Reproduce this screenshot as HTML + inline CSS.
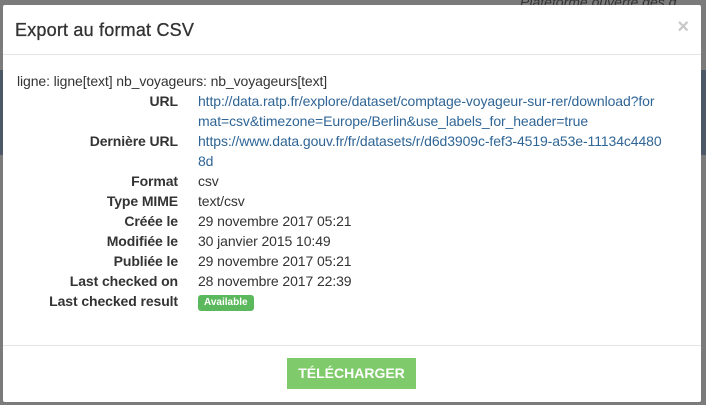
<!DOCTYPE html>
<html><head><meta charset="utf-8"><style>
html,body{margin:0;padding:0}
body{width:706px;height:405px;background:#7b7b7b;position:relative;overflow:hidden;font-family:"Liberation Sans",Arial,sans-serif;}
.bg1{position:absolute;left:0;top:70px;width:706px;height:85px;background:#4d5966}
.bgt{position:absolute;left:520px;top:-6px;color:#333;font-style:italic;font-size:14px}
.m{position:absolute;left:3px;top:5px;width:698px;height:397px;background:#fff;border-radius:2px}
.h{position:absolute;left:0;top:0;width:100%;height:49px;border-bottom:1px solid #e5e5e5}
.h .t{position:absolute;left:12px;top:15px;font-size:18px;color:#333;letter-spacing:0.2px;-webkit-text-stroke:0.3px #333}
.x{position:absolute;right:12px;top:11px;font-size:20px;color:#c8c8c8;font-weight:bold}
.b{position:absolute;left:14px;top:66px;font-size:14px;color:#333;line-height:20px;letter-spacing:-0.1px}
.row{position:absolute;left:0;width:690px}
.l{position:absolute;right:529px;font-weight:bold;white-space:nowrap}
.v{position:absolute;left:181px;white-space:nowrap}
a{color:#2f6596;text-decoration:none}
.badge{display:inline-block;background:#5cb85c;color:#fff;font-size:10px;font-weight:bold;padding:0 6px;line-height:16px;border-radius:3px;vertical-align:1px;letter-spacing:0}
.f{position:absolute;left:0;top:340px;width:100%;border-top:1px solid #e5e5e5}
.btn{position:absolute;left:284px;top:353px;width:129px;height:31px;background:#7fcb6b;color:#fff;font-weight:bold;font-size:14px;text-align:center;line-height:31px}
</style></head><body>
<div class="bg1"></div>
<div class="bgt">Plateforme ouverte des d</div>
<div class="m">
<div class="h"><div class="t">Export au format CSV</div><div class="x">×</div></div>
<div class="b">
<div class="row" style="top:0">ligne: ligne[text] nb_voyageurs: nb_voyageurs[text]</div>
<div class="row" style="top:20px"><span class="l">URL</span><span class="v"><a>http://data.ratp.fr/explore/dataset/comptage-voyageur-sur-rer/download?for<br>mat=csv&amp;timezone=Europe/Berlin&amp;use_labels_for_header=true</a></span></div>
<div class="row" style="top:60px"><span class="l">Dernière URL</span><span class="v"><a>https://www.data.gouv.fr/fr/datasets/r/d6d3909c-fef3-4519-a53e-11134c4480<br>8d</a></span></div>
<div class="row" style="top:100px"><span class="l">Format</span><span class="v">csv</span></div>
<div class="row" style="top:120px"><span class="l">Type MIME</span><span class="v">text/csv</span></div>
<div class="row" style="top:140px"><span class="l">Créée le</span><span class="v">29 novembre 2017 05:21</span></div>
<div class="row" style="top:160px"><span class="l">Modifiée le</span><span class="v">30 janvier 2015 10:49</span></div>
<div class="row" style="top:180px"><span class="l">Publiée le</span><span class="v">29 novembre 2017 05:21</span></div>
<div class="row" style="top:200px"><span class="l">Last checked on</span><span class="v">28 novembre 2017 22:39</span></div>
<div class="row" style="top:220px"><span class="l">Last checked result</span><span class="v"><span class="badge">Available</span></span></div>
</div>
<div class="f"></div>
<div class="btn">TÉLÉCHARGER</div>
</div>
</body></html>
